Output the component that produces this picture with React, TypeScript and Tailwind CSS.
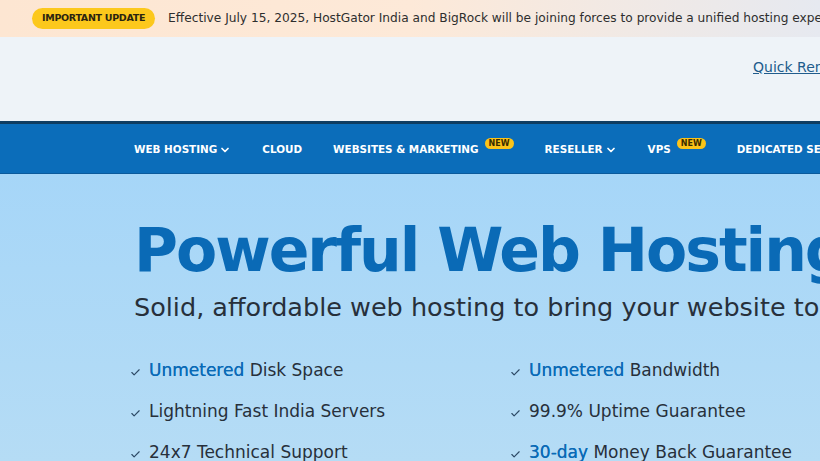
import { ChevronDown, Check } from 'lucide-react'

const font = { fontFamily: '"DejaVu Sans", "Open Sans", sans-serif' }

const navItems = [
  { label: 'WEB HOSTING', caret: true },
  { label: 'CLOUD' },
  { label: 'WEBSITES & MARKETING', isNew: true },
  { label: 'RESELLER', caret: true },
  { label: 'VPS', isNew: true },
  { label: 'DEDICATED SERVERS', caret: true },
]

const features = [
  [
    { hi: 'Unmetered', rest: ' Disk Space' },
    { hi: '', rest: 'Lightning Fast India Servers' },
    { hi: '', rest: '24x7 Technical Support' },
  ],
  [
    { hi: 'Unmetered', rest: ' Bandwidth' },
    { hi: '', rest: '99.9% Uptime Guarantee' },
    { hi: '30-day', rest: ' Money Back Guarantee' },
  ],
]

function NewBadge() {
  return (
    <span className="rounded-full bg-[#fcc419] px-[4px] py-[1px] text-[8px] font-bold leading-[10px] text-[#3a2c00]">
      NEW
    </span>
  )
}

export default function App() {
  return (
    <div className="h-[461px] w-[820px] overflow-hidden whitespace-nowrap" style={font}>
      {/* announcement bar */}
      <div className="flex h-[37px] items-center bg-gradient-to-r from-[#fde6d2] via-[#fde9d8] to-[#e6e9f0] pl-8">
        <span className="rounded-full bg-[#fcc81c] px-[10px] py-[3px] text-[9.5px] font-bold tracking-[-0.3px] text-[#2b2410]">
          IMPORTANT UPDATE
        </span>
        <span className="ml-[13px] text-[12.2px] text-[#2e2e2e]">
          Effective July 15, 2025, HostGator India and BigRock will be joining forces to provide a unified hosting experience.
        </span>
      </div>

      {/* header */}
      <div className="flex h-[84px] items-start bg-[#eef3f8] pl-[753px] pt-[20px]">
        <a className="text-[14px] leading-[20px] text-[#215c8c] underline">Quick Renew</a>
      </div>

      {/* nav */}
      <nav className="flex h-[53px] items-center gap-[31px] border-t-[3px] border-b border-t-[#0f3d62] border-b-[#0a5a9c] bg-[#0b6dba] pl-[134px] pt-[3px] text-[10.4px] font-bold text-white">
        {navItems.map((n) => (
          <div key={n.label} className="flex items-center">
            <span>{n.label}</span>
            {n.caret && <ChevronDown className="ml-[2px] h-3 w-3" strokeWidth={3.5} />}
            {n.isNew && (
              <span className="-mt-[15px] ml-[6px]">
                <NewBadge />
              </span>
            )}
          </div>
        ))}
      </nav>

      {/* hero */}
      <div className="h-[287px] bg-gradient-to-b from-[#a6d6f8] to-[#b5dcf5] pl-[134px] pt-[40px]">
        <h1 className="text-[60px] font-bold leading-[72px] tracking-[-2px] text-[#0a6ab6]">
          Powerful Web Hosting
        </h1>
        <p className="mt-[4px] text-[25.5px] leading-[34px] text-[#27303b]">
          Solid, affordable web hosting to bring your website to life
        </p>
        <div className="mt-[35px] flex">
          {features.map((col, ci) => (
            <ul key={ci} className={ci === 0 ? 'w-[380px]' : ''}>
              {col.map((f) => (
                <li key={f.rest} className="mb-[18px] flex h-[23px] items-center text-[17px] text-[#27303b]">
                  <Check className="-ml-[4px] mr-[8px] mt-[3px] h-[11px] w-[11px] shrink-0 text-[#2d4a66]" strokeWidth={2.5} />
                  <span className="whitespace-pre">
                    {f.hi && <span className="text-[#0a6ab6] [text-shadow:0_0_0.4px_#0a6ab6]">{f.hi}</span>}
                    {f.rest}
                  </span>
                </li>
              ))}
            </ul>
          ))}
        </div>
      </div>
    </div>
  )
}
